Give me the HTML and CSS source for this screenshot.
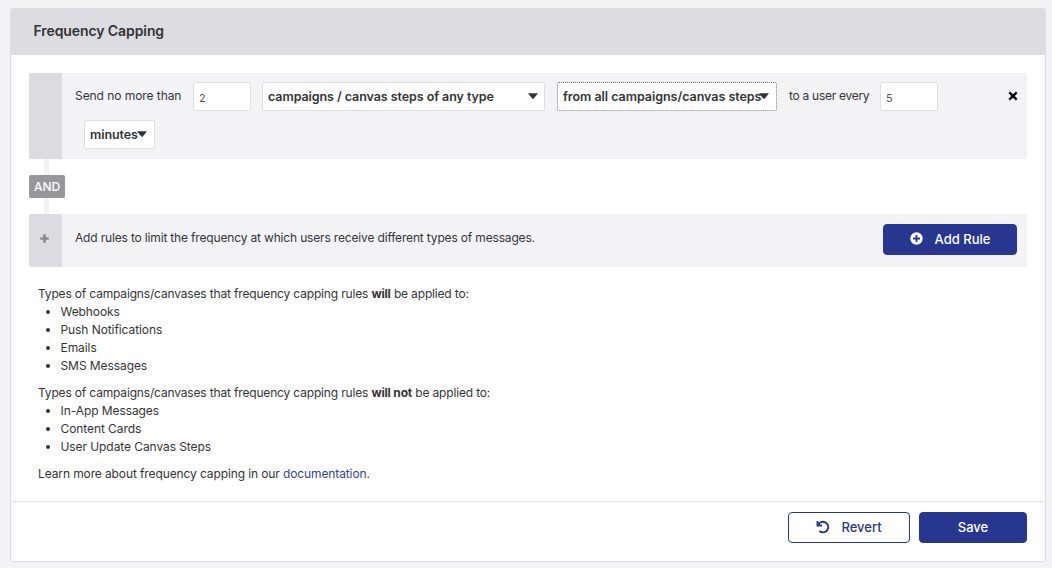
FILE: index.html
```html
<!DOCTYPE html>
<html lang="en">
<head>
<meta charset="utf-8">
<title>Frequency Capping</title>
<link rel="stylesheet" href="styles.css">
</head>
<body>
<main class="card">
  <header class="card-header"><h1 class="title">Frequency Capping</h1></header>
  <section class="card-body">
    <div class="rule rule-edit">
      <div class="handle"></div>
      <div class="fields">
        <div class="line">
          <span class="label label-send">Send no more than</span>
          <input class="number" type="text" value="2">
          <div class="select select-type"><span class="t-type">campaigns / canvas steps of any type</span><svg class="caret" viewBox="0 0 10 6"><path d="M0 .3h10L6 5.2q-1 1-2 0z"/></svg></div>
          <div class="select select-from"><span class="t-from">from all campaigns/canvas steps</span><svg class="caret" viewBox="0 0 10 6"><path d="M0 .3h10L6 5.2q-1 1-2 0z"/></svg></div>
          <span class="label label-every">to a user every</span>
          <input class="number" type="text" value="5">
        </div>
        <div class="line second">
          <div class="select select-unit"><span class="t-unit">minutes</span><svg class="caret" viewBox="0 0 10 6"><path d="M0 .3h10L6 5.2q-1 1-2 0z"/></svg></div>
        </div>
      </div>
      <svg class="remove" viewBox="0 0 9 9"><path d="M1.2 1.2l6.6 6.6M7.8 1.2L1.2 7.8"/></svg>
    </div>
    <div class="joiner"><span class="and">AND</span></div>
    <div class="rule rule-add">
      <div class="handle"><svg class="plus" viewBox="0 0 9 9"><path d="M4.5 .3v8.4M.3 4.5h8.4"/></svg></div>
      <p class="hint">Add rules to limit the frequency at which users receive different types of messages.</p>
      <button class="button primary add"><svg class="circle-plus" viewBox="0 0 13 13"><circle cx="6.5" cy="6.5" r="6.2"/><path d="M6.5 3v7M3 6.5h7"/></svg><span>Add Rule</span></button>
    </div>
    <div class="info">
      <p>Types of campaigns/canvases that frequency capping rules <b>will</b> be applied to:</p>
      <ul>
        <li>Webhooks</li>
        <li>Push Notifications</li>
        <li>Emails</li>
        <li>SMS Messages</li>
      </ul>
      <p>Types of campaigns/canvases that frequency capping rules <b>will not</b> be applied to:</p>
      <ul>
        <li>In-App Messages</li>
        <li>Content Cards</li>
        <li>User Update Canvas Steps</li>
      </ul>
      <p class="learn">Learn more about frequency capping in our <a href="#">documentation</a>.</p>
    </div>
  </section>
  <footer class="card-footer">
    <button class="button outline"><svg class="undo" viewBox="0 0 14 14"><path d="M1.5 1v4.5h4.6M2 5.3A5.3 5.3 0 1 1 3.4 11"/></svg><span>Revert</span></button>
    <button class="button primary save"><span>Save</span></button>
  </footer>
</main>
</body>
</html>
```
FILE: styles.css
```css
* { box-sizing: border-box; }
body {
  margin: 0;
  padding: 8px 6px 6px 10px;
  background: #f3f3f6;
  color: #333335;
  font: 12px/18px Inter, "Liberation Sans", sans-serif;
}
p, h1, ul { margin: 0; }
span { white-space: nowrap; }
.card {
  height: 554px;
  display: flex;
  flex-direction: column;
  background: #fff;
  border: 1px solid #dddde1;
  border-radius: 3px;
  overflow: hidden;
}
.card-header {
  height: 46px;
  padding: 12px 22.5px 0;
  background: #dddce1;
}
.title { font-size: 14px; line-height: 19px; font-weight: 600; letter-spacing: -0.09px; }
.card-body { flex: 1; padding: 18px 18px 0; }
.rule {
  display: flex;
  background: #f3f3f5;
  border-radius: 2px;
  overflow: hidden;
}
.rule-edit { height: 86px; }
.rule-add { height: 53px; padding-right: 10px; }
.handle {
  width: 33px;
  flex: none;
  display: flex;
  align-items: center;
  justify-content: center;
  background: #dcdbe0;
}
.fields { flex: 1; padding: 9px 0 0 13px; }
.line { display: flex; }
.second { padding: 9px 0 0 9px; }
.label { line-height: 28px; flex: none; }
.label-send { width: 118px; letter-spacing: -0.06px; }
.label-every { width: 91px; margin-left: 12px; letter-spacing: -0.28px; }
.number {
  width: 58px;
  height: 29px;
  padding: 2px 5px 0;
  border: 1px solid #dddde2;
  border-radius: 2px;
  background: #fff;
  color: #555;
  font: 11px Inter, sans-serif;
}
.select {
  height: 29px;
  flex: none;
  display: flex;
  align-items: center;
  padding: 0 6px 0 5px;
  background: #fff;
  border: 1px solid #dddde2;
  border-radius: 2px;
  font-size: 12.5px;
  font-weight: 600;
  letter-spacing: -0.07px;
}
.select-type { width: 283px; margin-left: 11px; }
.select-from { width: 220px; margin-left: 12px; border: 1px dotted #77777a; padding-right: 7px; letter-spacing: -0.03px; }
.select-unit { width: 71px; padding-right: 7px; }
.select span { flex: 1; width: 0; }
.caret { width: 10px; height: 6px; fill: #333335; flex: none; margin-top: -1px; }
.remove {
  width: 10px;
  height: 10px;
  margin: 18px 9px 0 0;
  stroke: #000;
  stroke-width: 2.1;
}
.joiner {
  height: 55px;
  padding-top: 16px;
  background: linear-gradient(#f3f3f5, #f3f3f5) 15px 0 / 5px 100% no-repeat;
}
.and {
  width: 36px;
  height: 23px;
  display: flex;
  align-items: center;
  justify-content: center;
  background: #979799;
  color: #fff;
  border-radius: 2px;
  font-weight: 500;
}
.plus { width: 9px; height: 9px; margin-right: 2px; margin-top: -4px; stroke: #8b8a8e; stroke-width: 2.7; }
.hint { flex: 1; padding: 15px 0 0 13px; letter-spacing: -0.165px; }
.button {
  height: 31px;
  display: flex;
  align-items: center;
  justify-content: center;
  padding: 0 0 2px;
  border: 1px solid #27368f;
  border-radius: 4px;
  font: 500 13px/18px Inter, sans-serif;
}
.primary { background: #27368f; color: #fff; }
.outline { width: 122px; background: #fff; color: #27368f; gap: 11px; }
.add { width: 134px; margin-top: 10px; gap: 12px; }
.save { width: 108px; }
.circle-plus { width: 13px; height: 13px; margin-top: -1px; fill: #fff; stroke: #27368f; stroke-width: 1.8; }
.circle-plus circle { stroke: none; }
.undo { width: 14px; height: 14px; fill: none; stroke: #27368f; stroke-width: 1.9; }
.info { padding: 18px 9px 0; letter-spacing: -0.165px; }
.info ul { padding: 0 0 9px 22.5px; letter-spacing: -0.08px; }
.info .learn { letter-spacing: -0.11px; }
.info a { color: #303f99; text-decoration: none; }
.card-footer {
  height: 60px;
  display: flex;
  justify-content: flex-end;
  gap: 9px;
  padding: 10px 18px 0;
  border-top: 1px solid #dddde1;
}
```
